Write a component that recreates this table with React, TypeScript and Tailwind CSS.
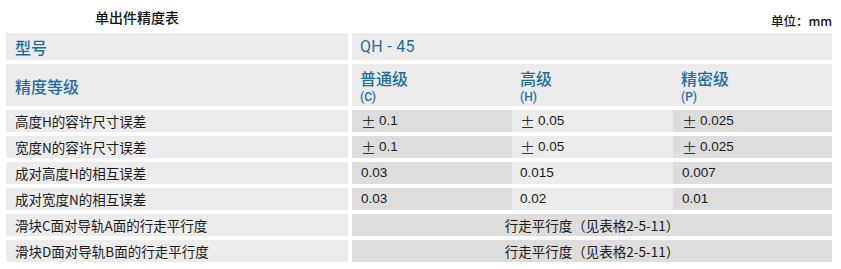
const cjk = "font-['Noto_Sans_CJK_SC',sans-serif]";
const num = "font-['Liberation_Sans','Noto_Sans_CJK_SC',sans-serif]";

const rows = [
  { label: "高度H的容许尺寸误差", values: ["0.1", "0.05", "0.025"], pm: true },
  { label: "宽度N的容许尺寸误差", values: ["0.1", "0.05", "0.025"], pm: true },
  { label: "成对高度H的相互误差", values: ["0.03", "0.015", "0.007"], pm: false },
  { label: "成对宽度N的相互误差", values: ["0.03", "0.02", "0.01"], pm: false },
];

const merged = ["滑块C面对导轨A面的行走平行度", "滑块D面对导轨B面的行走平行度"];

const grades = [
  { name: "普通级", code: "(C)", w: "w-[160px]" },
  { name: "高级", code: "(H)", w: "w-[161px]" },
  { name: "精密级", code: "(P)", w: "w-[159px]" },
];

function Value({ v, pm }: { v: string; pm: boolean }) {
  return (
    <span className={`flex items-center ${num}`}>
      {pm && <span className={`${cjk} text-[15px] leading-none mr-[3px] text-[#333]`}>±</span>}
      {v}
    </span>
  );
}

export default function App() {
  return (
    <main className={`w-[841px] h-[269px] bg-white pl-[6px] ${cjk}`}>
      {/* title line */}
      <div className="w-[826px] h-[33px] flex justify-between">
        <h1 className="pl-[89px] pt-[7px] text-[14px] leading-[20px] font-medium text-[#111]">
          单出件精度表
        </h1>
        <span className="pt-[12px] text-[12.5px] leading-[18px] font-medium text-[#111]">
          单位：mm
        </span>
      </div>

      <div className="w-[826px] flex flex-col gap-1">
        {/* model row */}
        <div className="flex h-[27px] gap-1">
          <div className="w-[342px] bg-[#ececec] pl-[9px] flex items-center text-[16px] font-medium text-[#1f6c9e]">
            型号
          </div>
          <div className="flex-1 bg-[#ececec] pl-[8px] flex items-center text-[16px] text-[#1f6c9e] font-['Roboto',sans-serif] tracking-[0.3px]">
            QH - 45
          </div>
        </div>

        {/* grade row */}
        <div className="flex h-[42px] gap-1">
          <div className="w-[342px] bg-[#ececec] pl-[9px] flex items-center pt-[1px] text-[16px] font-medium text-[#1f6c9e]">
            精度等级
          </div>
          <div className="flex-1 bg-[#ececec] flex">
            {grades.map((g) => (
              <div key={g.code} className={`${g.w} pl-[8px] pt-[3px] flex flex-col text-[#1f6c9e]`}>
                <span className="text-[16px] leading-[22px] font-medium">{g.name}</span>
                <span className="text-[12px] leading-[16px] font-medium font-['Roboto',sans-serif]">{g.code}</span>
              </div>
            ))}
          </div>
        </div>

        {/* value rows */}
        {rows.map((r) => (
          <div key={r.label} className="flex h-[22px] gap-1 text-[13.5px] text-[#1a1a1a]">
            <div className="w-[342px] bg-[#ececec] pl-[9px] flex items-center">{r.label}</div>
            <div className="flex-1 flex">
              <div className="w-[160px] bg-[#dcdddc] pl-[9px] flex items-center">
                <Value v={r.values[0]} pm={r.pm} />
              </div>
              <div className="w-[161px] bg-[#ececec] pl-[8px] flex items-center">
                <Value v={r.values[1]} pm={r.pm} />
              </div>
              <div className="w-[159px] bg-[#dcdddc] pl-[9px] flex items-center">
                <Value v={r.values[2]} pm={r.pm} />
              </div>
            </div>
          </div>
        ))}

        {merged.map((label) => (
          <div key={label} className="flex h-[22px] gap-1 text-[13.5px] text-[#1a1a1a]">
            <div className="w-[342px] bg-[#ececec] pl-[9px] flex items-center">{label}</div>
            <div className="flex-1 bg-[#dcdddc] flex items-center justify-center">
              行走平行度（见表格2-5-11）
            </div>
          </div>
        ))}
      </div>
    </main>
  );
}
